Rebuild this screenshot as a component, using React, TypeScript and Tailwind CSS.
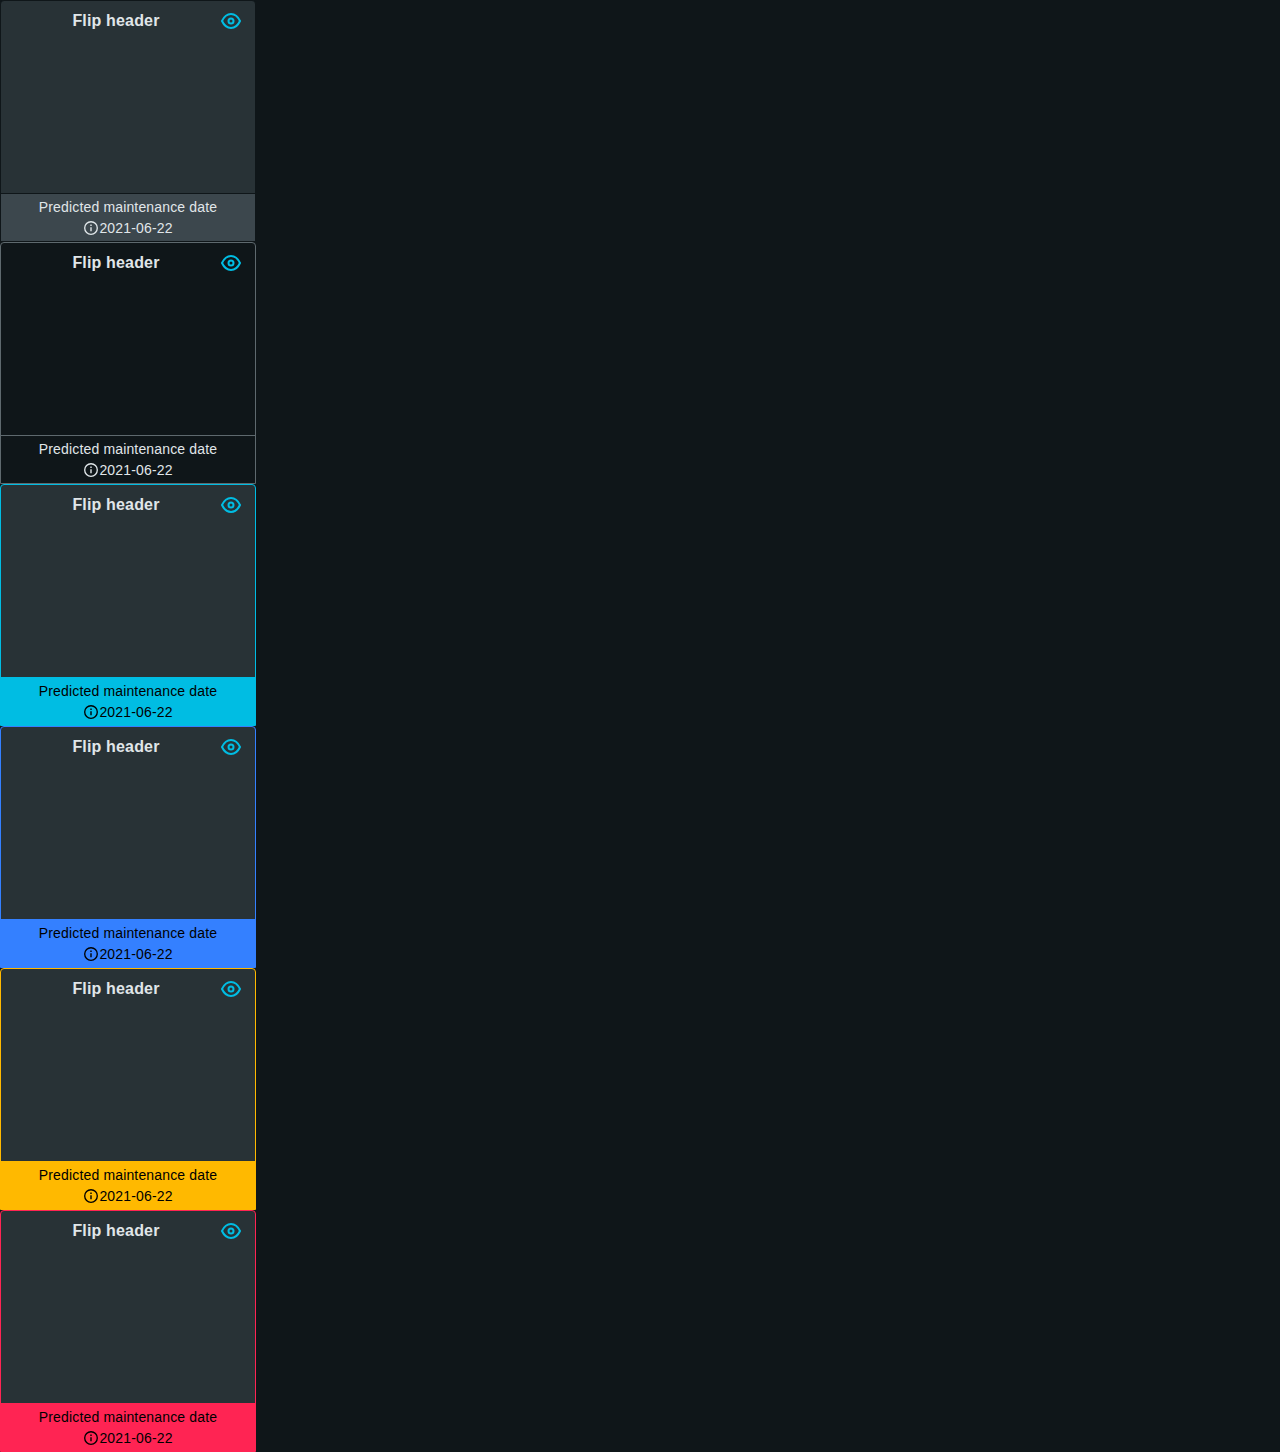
const EyeIcon = () => (
  <svg className="size-6 shrink-0 text-[#00bde3]" viewBox="0 0 24 24" fill="none" stroke="currentColor" strokeWidth="2">
    <path d="M3 12C5 7.7 8.2 5 12 5s7 2.7 9 7c-2 4.3-5.2 7-9 7s-7-2.7-9-7Z" />
    <circle cx="12" cy="12" r="2.5" />
  </svg>
);

const InfoIcon = () => (
  <svg className="mb-px size-4 shrink-0" viewBox="0 0 16 16" fill="none" stroke="currentColor">
    <circle cx="8" cy="8" r="6.3" strokeWidth="1.35" />
    <path d="M8 7.2v4M8 4.6v1.4" strokeWidth="1.4" />
  </svg>
);

const cards = [
  { card: "border-[#0f1619] bg-[#283236]", footer: "border-[#0f1619] bg-[#3c474d] text-[#e0e6e9]" },
  { card: "border-[#5e696e] bg-[#0f1619]", footer: "border-[#5e696e] text-[#e0e6e9]" },
  { card: "border-[#00bde3] bg-[#283236]", footer: "border-[#00bde3] bg-[#00bde3] text-black" },
  { card: "border-[#3480ff] bg-[#283236]", footer: "border-[#3480ff] bg-[#3480ff] text-black" },
  { card: "border-[#ffb900] bg-[#283236]", footer: "border-[#ffb900] bg-[#ffb900] text-black" },
  { card: "border-[#ff2453] bg-[#283236]", footer: "border-[#ff2453] bg-[#ff2453] text-black" },
];

export default function App() {
  return (
    <main className="min-h-[1452px] bg-[#0f1619] font-['Liberation_Sans',sans-serif] tracking-[0.16px]">
      {cards.map((c, i) => (
        <section key={i} className={`flex h-[242px] w-64 flex-col rounded-t border ${c.card}`}>
          <header className="flex h-10 items-center pr-3">
            <h2 className="flex-1 pl-3 text-center text-base font-bold text-[#e0e6e9]">Flip header</h2>
            <EyeIcon />
          </header>
          <div className="flex-1" />
          <footer className={`h-12 border-t text-center text-sm leading-[21px] ${c.footer}`}>
            <div className="pt-[3px]">Predicted maintenance date</div>
            <div className="flex items-center justify-center">
              <InfoIcon />
              <span>2021-06-22</span>
            </div>
          </footer>
        </section>
      ))}
    </main>
  );
}
